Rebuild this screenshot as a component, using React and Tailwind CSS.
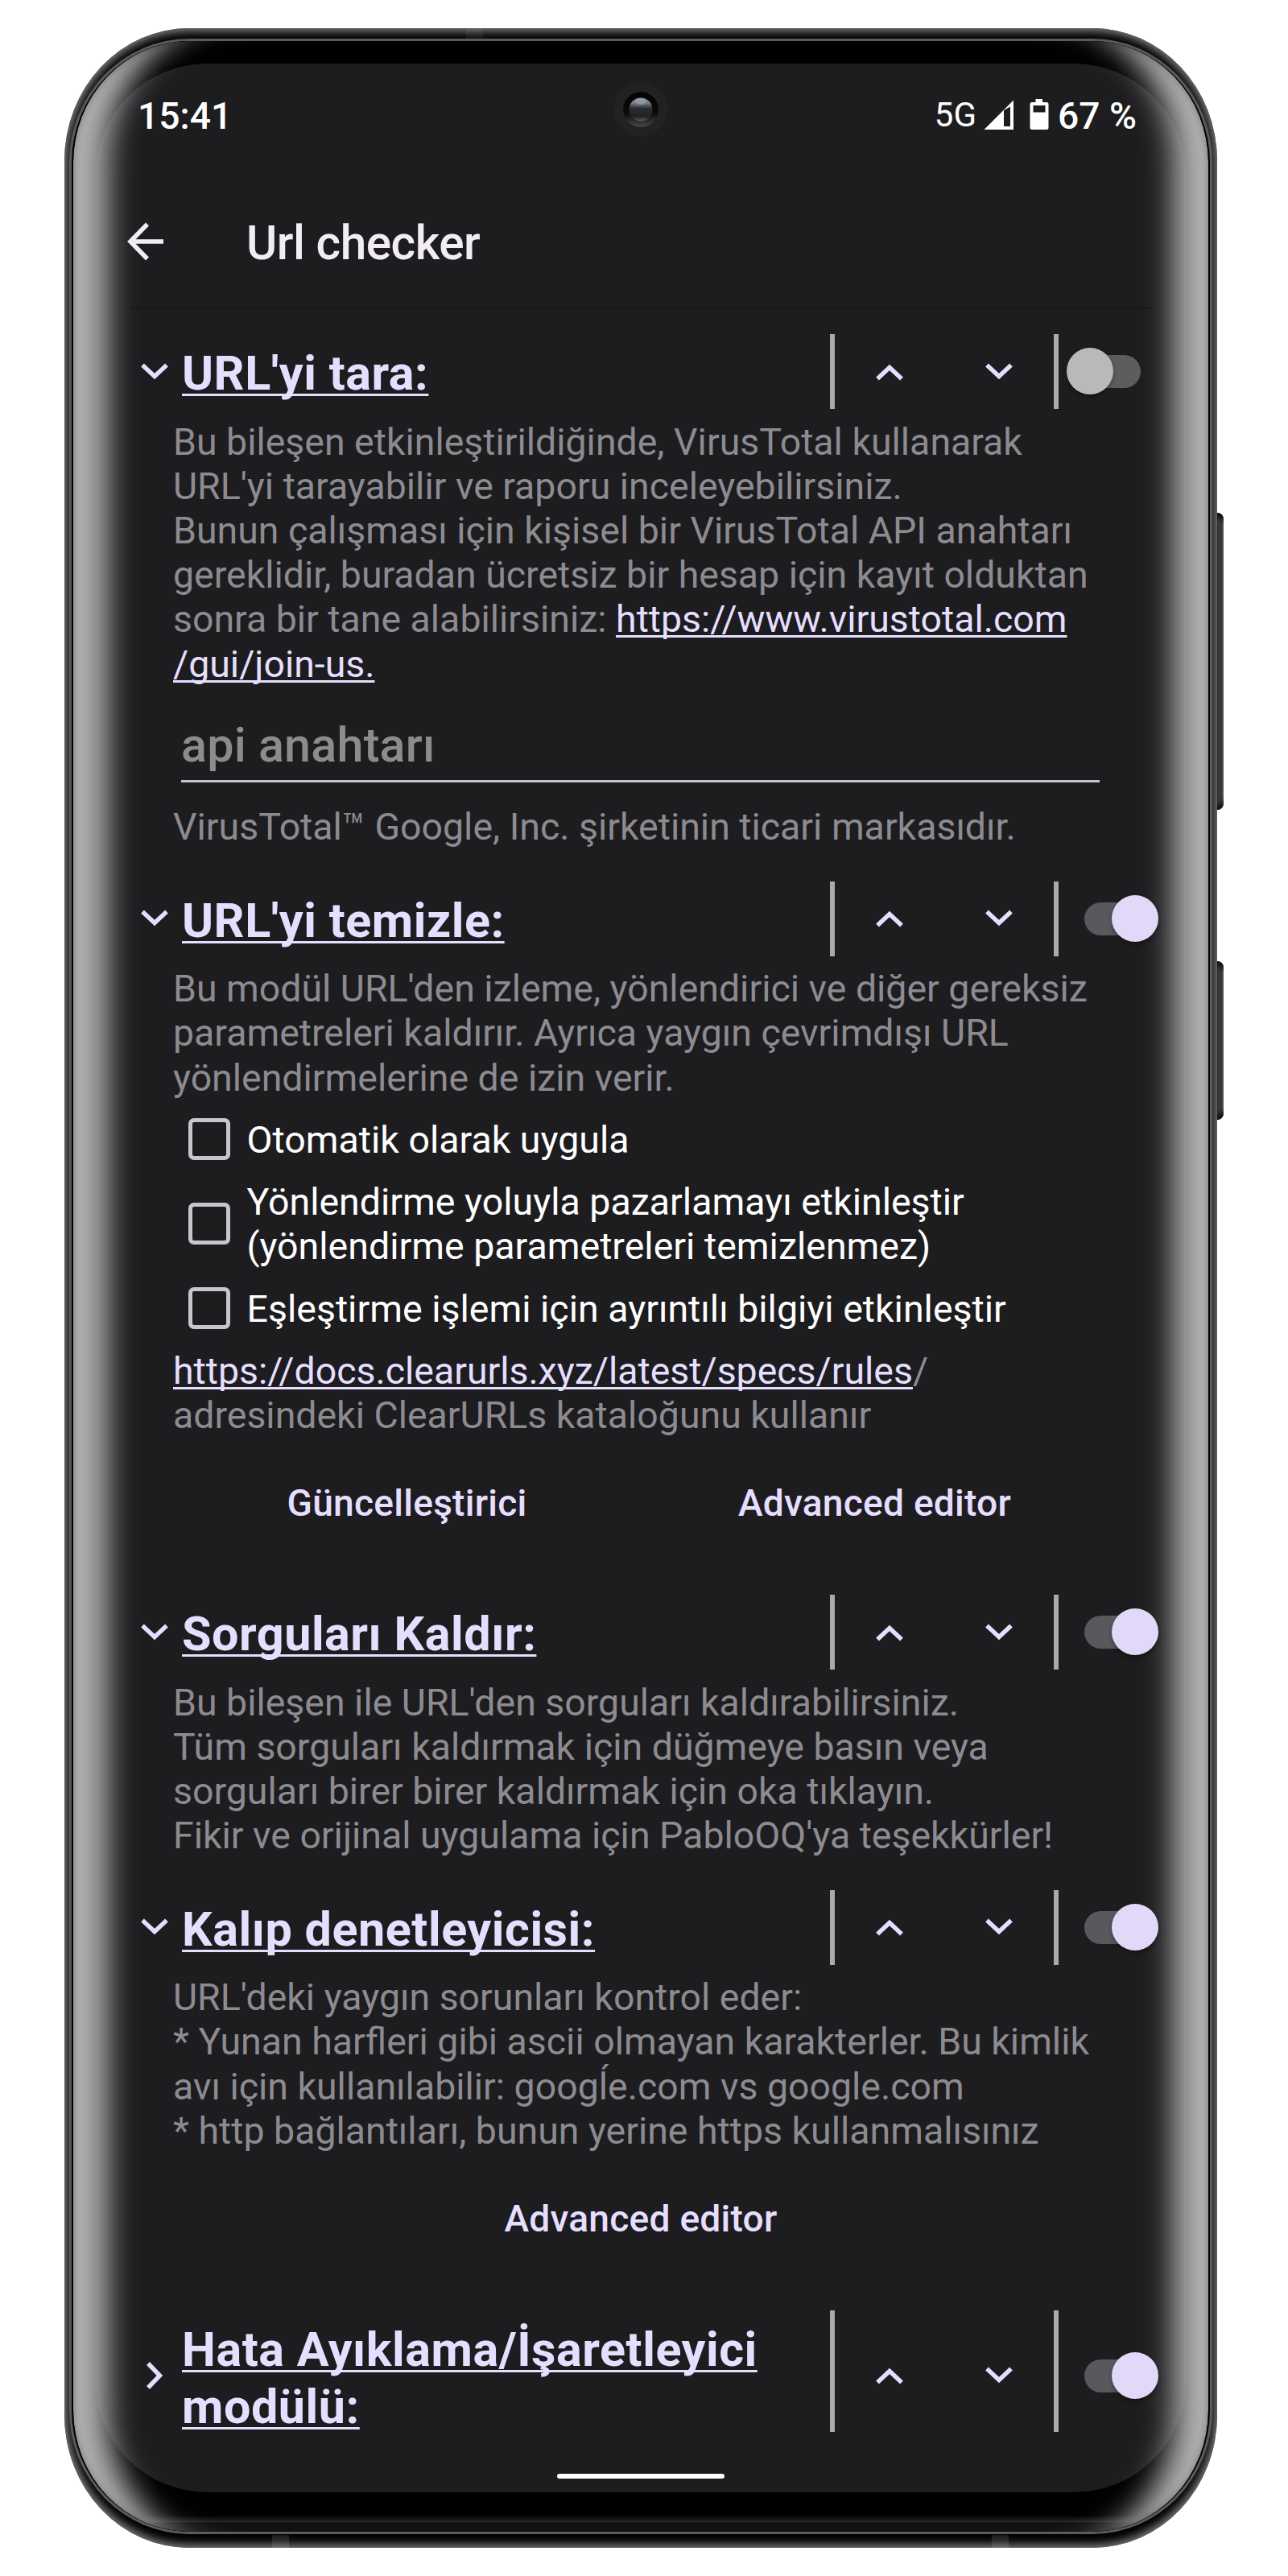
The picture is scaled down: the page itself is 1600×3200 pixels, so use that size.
const LINK = "text-[#e6deff] underline decoration-[2.5px] underline-offset-[4px] [text-decoration-skip-ink:none]";

function Chevron({ dir = "down" }) {
  const d = {
    down: "M2 8.5 L17 22.5 L32 8.5",
    up: "M2 25.5 L17 11.5 L32 25.5",
    right: "M9 2 L23.5 17 L9 32",
  }[dir];
  return (
    <svg width="34" height="34" viewBox="0 0 34 34" fill="none" stroke="#e6deff" strokeWidth="5.4" className="shrink-0 overflow-visible">
      <path d={d} />
    </svg>
  );
}

function Switch({ on }) {
  return (
    <div className={`relative h-[41px] w-[70px] shrink-0 ${on ? "bg-[#59585c] rounded-l-full" : "bg-[#5d5d5e] rounded-r-full"}`}>
      <div
        className={`absolute -top-[9px] size-[58px] rounded-full shadow-[0_3px_5px_rgba(0,0,0,0.35)] ${
          on ? "left-[34px] bg-[#e1d9f7]" : "-left-[22px] bg-[#b9b9b9]"
        }`}
      />
    </div>
  );
}

function Header({ title, on = true, open = true, tall = false }) {
  return (
    <div className={`flex pl-[57px] ${tall ? "h-[151px]" : "h-[93px]"}`}>
      <div className={`flex items-center ${tall ? "pt-[11px]" : ""}`}>
        <Chevron dir={open ? "down" : "right"} />
      </div>
      <h2 className="ml-[17px] w-[805px] shrink-0 pt-[13px] text-[59.3px] leading-[71px] font-bold tracking-[0.53px] whitespace-pre text-[#e6deff] underline decoration-[3px] underline-offset-[5px] [text-decoration-skip-ink:none]">
        {title}
      </h2>
      <div className="w-[6px] shrink-0 bg-[#aaaaaa]" />
      <div className={`flex w-[272px] shrink-0 items-center ${tall ? "pt-[11px]" : ""}`}>
        <div className="flex flex-1 justify-center"><Chevron dir="up" /></div>
        <div className="flex flex-1 justify-center"><Chevron dir="down" /></div>
      </div>
      <div className="w-[6px] shrink-0 bg-[#aaaaaa]" />
      <div className={`flex items-center pl-[32px] ${tall ? "pt-[11px]" : ""}`}>
        <Switch on={on} />
      </div>
    </div>
  );
}

function Lines({ className = "", children }) {
  return (
    <div className={`ml-[97px] text-[46.45px] leading-[55.2px] whitespace-pre text-[#8d8b92] ${className}`}>
      {children}
    </div>
  );
}

function Check({ children }) {
  return (
    <label className="ml-[116px] flex items-center gap-[20.5px] text-[46.5px] leading-[55.2px] whitespace-pre text-white">
      <span className="mt-[-3px] size-[52px] shrink-0 rounded-[7px] border-[5.5px] border-[#cbc4cf]" />
      <span>{children}</span>
    </label>
  );
}

function Buttons({ labels }) {
  return (
    <div className="mt-[54px] ml-[97px] flex w-[1162px] text-[46.2px] leading-[55.2px] font-medium tracking-[0.2px] text-[#e6deff]">
      {labels.map((l) => (
        <button key={l} className="flex-1 text-center">{l}</button>
      ))}
    </div>
  );
}

function StatusBar() {
  return (
    <div className="relative flex h-[115px] pr-[62px] pl-[53px] text-[46.2px] leading-[56px] font-medium text-white">
      <div className="mt-[37px]">15:41</div>
      <div className="mt-[37px] ml-auto flex">
        <span className="text-[42px] leading-[54px] font-normal">5G</span>
        <svg width="38" height="38" viewBox="0 0 38 38" className="mt-[8px] ml-[9px]">
          <path fillRule="evenodd" fill="#fff" d="M0.5 37 L37 0.5 V37 Z M25 13 V33 H33 V8.5 Z" />
        </svg>
        <svg width="24" height="38" viewBox="0 0 24 38" className="mt-[7px] ml-[19px]">
          <path fillRule="evenodd" fill="#fff" d="M7.5 0 H16 V4 H21 Q23.5 4 23.5 6.5 V35.5 Q23.5 38 21 38 H3 Q0.5 38 0.5 35.5 V6.5 Q0.5 4 3 4 H7.5 Z M4.5 8 V16.5 H19.5 V8 Z" />
        </svg>
        <span className="ml-[11px]">67 %</span>
      </div>
      <svg width="68" height="68" viewBox="0 0 68 68" className="absolute top-[23px] left-[644px]">
        <defs>
          <linearGradient id="ring" x1="0" y1="0" x2="0" y2="1">
            <stop offset="0" stopColor="#040404" />
            <stop offset="0.6" stopColor="#0a0a0a" />
            <stop offset="1" stopColor="#48484a" />
          </linearGradient>
          <linearGradient id="lens" x1="0" y1="0" x2="0" y2="1">
            <stop offset="0" stopColor="#8f8f93" />
            <stop offset="0.2" stopColor="#85868a" />
            <stop offset="0.45" stopColor="#2c2c2e" />
            <stop offset="0.8" stopColor="#222223" />
            <stop offset="1" stopColor="#5a5a5b" />
          </linearGradient>
        </defs>
        <circle cx="34" cy="34" r="33.5" fill="#222224" />
        <circle cx="34" cy="34" r="22" fill="url(#ring)" />
        <circle cx="34" cy="34" r="14.5" fill="url(#lens)" />
        <ellipse cx="34" cy="24" rx="6" ry="4" fill="#8d9ab8" opacity="0.85" />
      </svg>
    </div>
  );
}

function Screen() {
  return (
    <div className="relative mt-[28px] ml-[27px] flex h-[3017px] w-[1356px] flex-col">
      <StatusBar />
      <div className="flex h-[188px] items-start pl-[40px] text-[#f2edf5]">
        <svg width="46" height="48" viewBox="0 0 46 48" fill="none" stroke="#f2edf5" strokeWidth="5.6" className="mt-[82px] shrink-0">
          <path d="M45 24 H4 M25 2.5 L4 24 L25 45.5" />
        </svg>
        <h1 className="ml-[102px] mt-[73px] text-[58.6px] leading-[70px] font-medium tracking-[-0.5px]">Url checker</h1>
      </div>
      <div className="mx-[44px] h-[2px] shrink-0 bg-[#19191b]" />

      <section className="mt-[31px] h-[679.5px] shrink-0">
        <Header title="URL'yi tara:" on={false} />
        <Lines className="mt-[13.6px]">
          <p>{"Bu bileşen etkinleştirildiğinde, VirusTotal kullanarak\nURL'yi tarayabilir ve raporu inceleyebilirsiniz.\nBunun çalışması için kişisel bir VirusTotal API anahtarı\ngereklidir, buradan ücretsiz bir hesap için kayıt olduktan"}</p>
          <p>{"sonra bir tane alabilirsiniz: "}<a className={LINK}>https://www.virustotal.com</a></p>
          <p><a className={LINK}>/gui/join-us.</a></p>
        </Lines>
        <div className="mt-[38px] ml-[107px] h-[81px] w-[1141px] border-b-[3px] border-[#c9c2cd] text-[59.3px] leading-[70px] font-medium tracking-[0.2px] text-[#8c8c8c]">
          api anahtarı
        </div>
        <Lines className="mt-[28px]">VirusTotal™ Google, Inc. şirketinin ticari markasıdır.</Lines>
      </section>

      <section className="h-[886.5px] shrink-0">
        <Header title="URL'yi temizle:" />
        <Lines className="mt-[13.6px]">
          {"Bu modül URL'den izleme, yönlendirici ve diğer gereksiz\nparametreleri kaldırır. Ayrıca yaygın çevrimdışı URL\nyönlendirmelerine de izin verir."}
        </Lines>
        <div className="mt-[21.9px] flex flex-col gap-[22.2px]">
          <Check>Otomatik olarak uygula</Check>
          <Check>{"Yönlendirme yoluyla pazarlamayı etkinleştir\n(yönlendirme parametreleri temizlenmez)"}</Check>
          <Check>Eşleştirme işlemi için ayrıntılı bilgiyi etkinleştir</Check>
        </div>
        <Lines className="mt-[22.3px]">
          <p><a className={LINK}>https://docs.clearurls.xyz/latest/specs/rules</a>/</p>
          <p>adresindeki ClearURLs kataloğunu kullanır</p>
        </Lines>
        <Buttons labels={["Güncelleştirici", "Advanced editor"]} />
      </section>

      <section className="h-[366.5px] shrink-0">
        <Header title="Sorguları Kaldır:" />
        <Lines className="mt-[13.6px]">
          {"Bu bileşen ile URL'den sorguları kaldırabilirsiniz.\nTüm sorguları kaldırmak için düğmeye basın veya\nsorguları birer birer kaldırmak için oka tıklayın.\nFikir ve orijinal uygulama için PabloOQ'ya teşekkürler!"}
        </Lines>
      </section>

      <section className="h-[522.5px] shrink-0">
        <Header title="Kalıp denetleyicisi:" />
        <Lines className="mt-[13.6px]">
          {"URL'deki yaygın sorunları kontrol eder:\n* Yunan harfleri gibi ascii olmayan karakterler. Bu kimlik\navı için kullanılabilir: googĺe.com vs google.com\n* http bağlantıları, bunun yerine https kullanmalısınız"}
        </Lines>
        <Buttons labels={["Advanced editor"]} />
      </section>

      <section className="h-[203px] shrink-0">
        <Header title={"Hata Ayıklama/İşaretleyici\nmodülü:"} open={false} tall />
      </section>
      <div className="h-[6px] w-[208px] shrink-0 self-center rounded-full bg-white" />
    </div>
  );
}

export default function App() {
  return (
    <div className="h-[3200px] w-[1600px] overflow-hidden bg-white pt-[35px] pl-[80px] font-['Roboto',sans-serif]">
      <div className="relative h-[3130px] w-[1432px]">
        <div className="absolute top-[602px] -right-[8px] h-[369px] w-[16px] rounded-r-[8px] bg-linear-to-r from-[#333] from-50% via-[#3c3c3d] via-85% to-[#8a8a8a] shadow-[inset_0_8px_5px_-2px_#111,inset_0_-8px_5px_-2px_#111]" />
        <div className="absolute top-[1159px] -right-[8px] h-[197px] w-[16px] rounded-r-[8px] bg-linear-to-r from-[#333] from-50% via-[#3c3c3d] via-85% to-[#8a8a8a] shadow-[inset_0_8px_5px_-2px_#111,inset_0_-8px_5px_-2px_#111]" />
        <div className="relative h-full w-full rounded-[155px/165px] bg-black px-[6px] pt-[13px] pb-[17px] shadow-[inset_0_0_12px_4px_#838386]">
          <div className="absolute top-0 left-[499px] h-[13px] w-[21px] bg-white/5" />
          <div className="absolute bottom-0 left-[258px] h-[16px] w-[21px] bg-white/10" />
          <div className="absolute bottom-0 left-[1152px] h-[16px] w-[21px] bg-white/10" />
          <div className="h-full w-full rounded-[149px/154px] border-[3px] border-[#5b5b5d] bg-black px-[2px]">
            <div className="relative h-full w-full overflow-hidden rounded-[144px/151px] bg-black">
              <div className="absolute inset-x-0 bottom-0 h-[25px] bg-linear-to-b from-black via-[#27272a] via-[52%] to-[#111] to-[55%]" />
              <div className="absolute top-[28px] left-[27px] h-[3017px] w-[1356px] rounded-[140px/140px] bg-[#1d1d1f]" />
              <div className="absolute inset-0 rounded-[144px/151px] shadow-[inset_0_0_8px_0_rgba(0,0,0,0.35),inset_78px_0_36px_-35px_#b0b0b0,inset_-78px_0_36px_-35px_#b0b0b0]" />
              <Screen />
            </div>
          </div>
        </div>
      </div>
    </div>
  );
}
